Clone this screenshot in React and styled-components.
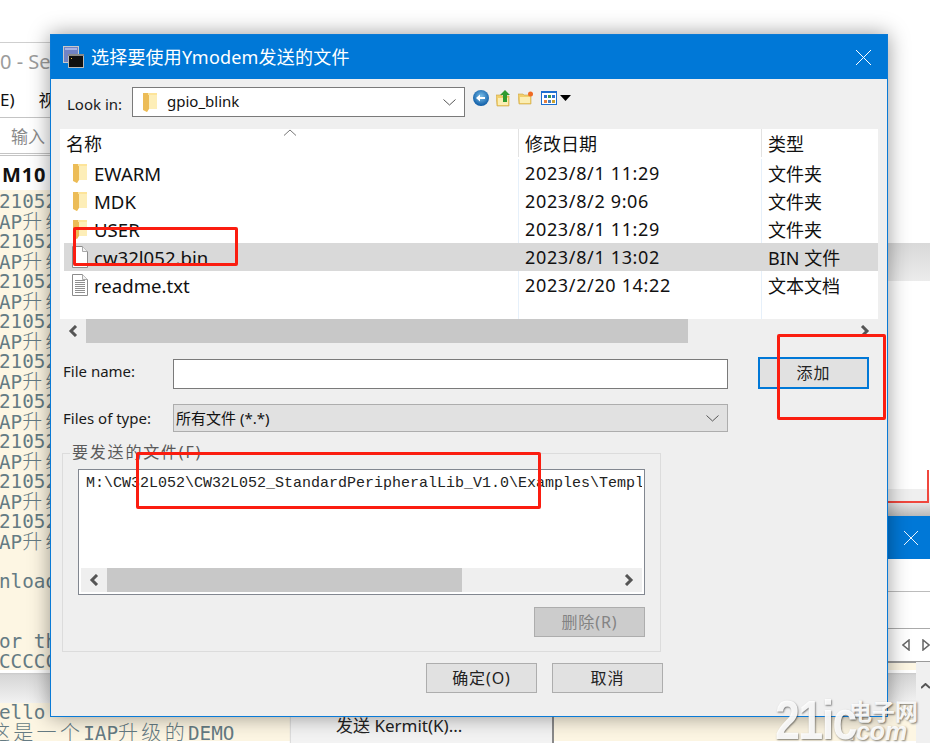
import styled, { createGlobalStyle } from 'styled-components';

const uiFont = `"Noto Sans", "Noto Sans CJK SC", sans-serif`;
const termFont = `"DejaVu Sans Mono", "Noto Sans CJK SC", monospace`;

const GlobalStyle = createGlobalStyle`
  html, body {
    margin: 0;
    padding: 0;
    background: #fff;
  }
  * {
    box-sizing: border-box;
  }
`;

const Screen = styled.div`
  position: relative;
  width: 930px;
  height: 743px;
  overflow: hidden;
  background: #fff;
  font-family: ${uiFont};
`;

/* window behind the dialog, left side */
const BackWindow = styled.div`
  position: absolute;
  left: 0;
  top: 42px;
  width: 916px;
  height: 701px;
  display: flex;
  flex-direction: column;
  border-top: 1px solid #cfcfcf;
  background: #fff;
`;

const BackTitle = styled.div`
  height: 39px;
  padding-top: 4px;
  font-size: 20px;
  line-height: 30px;
  color: #9c9c9c;
  white-space: nowrap;
`;

const BackMenu = styled.div`
  height: 36px;
  display: flex;
  gap: 24px;
  align-items: center;
  font-size: 17px;
  color: #111;
  border-bottom: 1px solid #c4c4c4;
`;

const BackInput = styled.div`
  height: 38px;
  padding-left: 11px;
  font-size: 17px;
  line-height: 38px;
  color: #8a8a8a;
  border-bottom: 3px double #c4c4c4;
`;

const BackTab = styled.div`
  height: 34px;
  padding: 2px 0 0 2px;
  font-family: "Noto Sans", sans-serif;
  font-size: 20px;
  font-weight: 700;
  line-height: 34px;
  letter-spacing: 0.8px;
  color: #111;
`;

const Terminal = styled.div`
  height: ${p => p.$height}px;
  overflow: hidden;
  padding-top: ${p => p.$top || 0}px;
  background: #fdf6e3;
  font-family: ${termFont};
  font-size: 19.3px;
  line-height: 20px;
  color: #657b83;
  white-space: pre;
`;

const TermLine = styled.div`
  height: 20px;
  margin-left: ${p => p.$left ?? -12.6}px;
`;

const Cjk = styled.span`
  font-size: 20px;
  font-weight: 300;
  letter-spacing: 3.3px;
`;

const BackStatus = styled.div`
  height: 33px;
  background: linear-gradient(#fff 0, #fff 3px, #c9c9c9 3px, #d6d6d6 5px, #f2f2f2 100%);
`;

/* popup menu peeking out below the dialog */
const PopupMenu = styled.div`
  position: absolute;
  left: 291px;
  top: 690px;
  width: 263px;
  height: 53px;
  padding: 23px 0 0 45px;
  font-size: 17px;
  line-height: 26px;
  color: #222;
  background: #f3f3f3;
  border-right: 2px solid #8a8a8a;
  box-shadow: -1px 0 1px #ddd;
`;

/* other windows showing at the right edge */
const RightStrip = styled.div`
  position: absolute;
  left: 880px;
  top: 0;
  width: 50px;
  height: 662px;
  display: flex;
  flex-direction: column;
  background: #fff;
`;

const StripBlock = styled.div`
  flex: 0 0 ${p => p.$height}px;
  background: ${p => p.$bg || '#fff'};
  border-bottom: ${p => (p.$line ? `1px solid ${p.$line}` : 'none')};
`;

const StripTitle = styled.div`
  flex: 0 0 43px;
  display: flex;
  align-items: center;
  justify-content: flex-end;
  padding-right: 12px;
  background: #0078d7;
`;

const StripArrows = styled.div`
  flex: 0 0 34px;
  display: flex;
  align-items: center;
  gap: 12px;
  padding-left: 22px;
  background: #fff;
  border-bottom: 2px solid #9a9a9a;
`;

const SideScroll = styled.div`
  position: absolute;
  left: 916px;
  top: 662px;
  width: 14px;
  height: 81px;
  padding: 10px 0 0 5px;
  background: #f0f0f0;
`;

/* the file dialog */
const Dialog = styled.div`
  position: absolute;
  left: 50px;
  top: 34px;
  width: 838px;
  height: 683px;
  display: flex;
  flex-direction: column;
  border: 1px solid #0a7ad6;
  background: #efefef;
  box-shadow: 0 0 20px rgba(0, 0, 0, 0.4);
`;

const TitleBar = styled.div`
  flex: 0 0 44px;
  display: flex;
  align-items: center;
  padding: 0 16px 0 12px;
  background: #0078d7;
  color: #fff;
  font-size: 18px;
`;

const TitleText = styled.div`
  flex: 1;
  margin-left: 7px;
  margin-top: -3px;
  letter-spacing: 0.2px;
`;

const Body = styled.div`
  flex: 1;
  display: flex;
  flex-direction: column;
  padding: 8px 9px 0;
`;

const LookRow = styled.div`
  display: flex;
  align-items: center;
  height: 30px;
  padding-left: 7px;
`;

const FieldLabel = styled.div`
  flex: 0 0 ${p => p.$width}px;
  font-size: 15px;
  color: #1a1a1a;
  margin-top: ${p => p.$top || 0}px;
`;

const Combo = styled.div`
  flex: 0 0 ${p => p.$width}px;
  height: ${p => p.$height}px;
  display: flex;
  align-items: center;
  padding: 0 8px 0 ${p => p.$pad}px;
  border: 1px solid ${p => (p.$gray ? '#adadad' : '#7a7a7a')};
  background: ${p => (p.$gray ? '#e1e1e1' : '#fff')};
  font-size: 15px;
  color: #111;
`;

const ComboText = styled.div`
  flex: 1;
  margin-left: ${p => p.$gap || 0}px;
  margin-top: -2px;
`;

const ToolIcons = styled.div`
  display: flex;
  align-items: center;
  height: 30px;
  margin: -8px 0 0 8px;
  gap: 7px;
`;

const FilePanel = styled.div`
  margin-top: 12px;
  height: 190px;
  display: flex;
  flex-direction: column;
  background: #fff;
  font-size: 18px;
  color: #111;
`;

const ListRow = styled.div`
  flex: ${p => (p.$fill ? '1' : `0 0 ${p.$height || 28}px`)};
  display: grid;
  grid-template-columns: 454px 243px 117px;
  margin-left: 4px;
  background: ${p => (p.$selected ? '#d9d9d9' : 'transparent')};
`;

const HeaderRow = styled(ListRow)`
  position: relative;
  margin-left: 0;
  padding-bottom: 2px;
  grid-template-columns: 458px 243px 117px;
`;

const SortCaret = styled.svg`
  position: absolute;
  left: 223px;
  top: 0;
`;

const NameCell = styled.div`
  display: flex;
  align-items: center;
  gap: 6px;
  padding-left: ${p => p.$pad ?? 8}px;
  white-space: nowrap;
`;

const FileName = styled.span`
  font-size: 18.6px;
`;

const IconSlot = styled.div`
  flex: 0 0 16px;
  width: 16px;
  min-width: 0;
  display: flex;
  justify-content: center;

  svg {
    flex: none;
  }
`;

const Cell = styled.div`
  display: flex;
  align-items: center;
  padding-left: 6px;
  border-left: 1px solid ${p => (p.$head ? '#e2e2e2' : p.$selected ? '#d9d9d9' : '#e6f0fa')};
  white-space: nowrap;
`;

const DateCell = styled(Cell)`
  letter-spacing: 0.65px;
`;

const ScrollBar = styled.div`
  flex: 0 0 ${p => p.$height}px;
  display: flex;
  align-items: stretch;
  background: #efefef;
`;

const ScrollButton = styled.div`
  flex: 0 0 ${p => p.$width}px;
  display: flex;
  align-items: center;
  justify-content: center;
`;

const ScrollThumb = styled.div`
  flex: 0 0 ${p => p.$width}px;
  background: #c8c8c8;
`;

const ScrollGap = styled.div`
  flex: 1;
`;

const FormRow = styled.div`
  display: flex;
  align-items: center;
  height: ${p => p.$height}px;
  margin-top: ${p => p.$top}px;
  padding-left: 3px;
`;

const TextInput = styled.div`
  flex: 0 0 555px;
  height: 30px;
  border: 1px solid #7a7a7a;
  background: #fff;
`;

const Button = styled.div`
  flex: 0 0 111px;
  width: 111px;
  height: ${p => p.$height || 30}px;
  display: flex;
  align-items: center;
  justify-content: center;
  padding-bottom: 3px;
  border: ${p => (p.$focus ? '2px solid #0078d7' : '1px solid #adadad')};
  background: ${p => (p.$disabled ? '#cccccc' : '#e1e1e1')};
  color: ${p => (p.$disabled ? '#838383' : '#222')};
  font-size: 16px;
  letter-spacing: 0.9px;
`;

const AddButton = styled(Button)`
  margin: -2px 0 0 30px;
`;

const Group = styled.div`
  position: relative;
  margin: ${p => p.$top}px 0 0 2px;
  width: 599px;
  height: 199px;
  padding: 15px 0 0 15px;
  border: 1px solid #dcdcdc;
`;

const Legend = styled.div`
  position: absolute;
  left: 7px;
  top: -13px;
  padding: 0 2px;
  background: #efefef;
  font-size: 16px;
  line-height: 22px;
  letter-spacing: 1.8px;
  color: #5a5a5a;
`;

const PathBox = styled.div`
  width: 567px;
  height: 126px;
  display: flex;
  flex-direction: column;
  padding: 0 2px 2px;
  border: 1px solid #828790;
  background: #fff;
`;

const PathText = styled.div`
  flex: 1;
  overflow: hidden;
  padding: 3px 0 0 5px;
  font-family: "Liberation Mono", monospace;
  font-size: 15px;
  line-height: 22px;
  color: #222;
  white-space: pre;
`;

const GroupFoot = styled.div`
  display: flex;
  justify-content: flex-end;
  width: 567px;
  margin-top: 12px;
`;

const ActionRow = styled.div`
  display: flex;
  gap: 15px;
  margin-top: 11px;
  padding-left: 366px;
`;

/* annotations and watermark that sit on top */
const RedBox = styled.div`
  position: absolute;
  left: ${p => p.$x}px;
  top: ${p => p.$y}px;
  width: ${p => p.$w}px;
  height: ${p => p.$h}px;
  border: 3px solid #fb1d10;
  border-radius: 2px;
`;

const StripRed = styled.div`
  position: absolute;
  left: 860px;
  top: 470px;
  width: 69px;
  height: 33px;
  border-right: 2px solid #f0473d;
  border-bottom: 2px solid #f0473d;
  background: linear-gradient(#fff 0, #fff 19px, #efefef 19px);
`;

const Watermark = styled.div`
  position: absolute;
  left: 775px;
  top: 696px;
  display: flex;
  color: rgba(255, 255, 255, 0.92);
  text-shadow: 1px 1px 2px rgba(0, 0, 0, 0.5);
`;

const MarkBig = styled.div`
  width: 74px;
  font-family: "Liberation Sans", sans-serif;
  font-size: 56px;
  font-weight: 700;
  line-height: 48px;
  letter-spacing: -2px;
  transform: scaleX(0.8);
  transform-origin: left center;
  white-space: nowrap;
`;

const MarkSide = styled.div`
  display: flex;
  flex-direction: column;
  padding-top: 2px;
  font-family: "Noto Sans CJK SC", sans-serif;
  font-size: 23px;
  font-weight: 700;
  line-height: 24px;
`;

const MarkCom = styled.div`
  font-family: "Liberation Sans", sans-serif;
  font-size: 25px;
  font-style: italic;
  font-weight: 700;
  line-height: 18px;
`;

const Folder = () => (
  <svg width="15" height="21" viewBox="0 0 15 21">
    <path d="M1 1h13v16H5l-1 3-3-2z" fill="#fde49a" />
    <path d="M6 3h8v14H6z" fill="#fdeeb8" />
    <path d="M0 1h5v2h1v14l-2 3-4-2z" fill="#ecbc57" />
  </svg>
);

const PaperIcon = ({ lines }) => (
  <svg width="18" height="22" viewBox="0 0 18 22">
    <path d="M1.5.5h10l5 5v16h-15z" fill="#fff" stroke="#8c8c8c" />
    <path d="M11.5.5v5h5" fill="#f2f2f2" stroke="#a8a8a8" />
    {lines &&
      [6, 8, 10, 12, 14, 16, 18].map(y => <path key={y} d={`M4 ${y + 0.5}h10`} stroke="#8f8f8f" />)}
  </svg>
);

const TitleIcon = () => (
  <svg width="21" height="22" viewBox="0 0 21 22">
    <rect x="0.5" y="0.5" width="15" height="16" fill="#7183c4" stroke="#c9c9c9" />
    <rect x="2" y="2" width="12" height="2" fill="#a6b4e6" />
    <rect x="5.5" y="8.5" width="15" height="13" fill="#111" stroke="#b8b8b8" />
    <rect x="5" y="8" width="16" height="2" fill="#8a8a8a" />
    <rect x="8" y="12" width="1" height="1" fill="#e8c040" />
  </svg>
);

const CloseIcon = ({ size }) => (
  <svg width={size} height={size} viewBox="0 0 15 15">
    <path d="M0 0l15 15M15 0L0 15" stroke="#fff" strokeWidth="1" fill="none" />
  </svg>
);

const ChevronDown = () => (
  <svg width="13" height="7" viewBox="0 0 13 7">
    <path d="M.5.5l6 5.5 6-5.5" stroke="#555" fill="none" />
  </svg>
);

const ChevronSide = ({ left }) => (
  <svg width="10" height="12" viewBox="0 0 10 12">
    <path d={left ? 'M8 1L3 6l5 5' : 'M2 1l5 5-5 5'} stroke="#555" strokeWidth="3" fill="none" />
  </svg>
);

const TriangleSide = ({ left }) => (
  <svg width="8" height="12" viewBox="0 0 8 12">
    <path d={left ? 'M7 1v10L1 6z' : 'M1 1v10l6-5z'} stroke="#666" strokeWidth="1.5" fill="none" />
  </svg>
);

const BackIcon = () => (
  <svg width="16" height="16" viewBox="0 0 16 16">
    <defs>
      <radialGradient id="backBall" cx="0.5" cy="0.4" r="0.6">
        <stop offset="0" stopColor="#7cc0ea" />
        <stop offset="1" stopColor="#0b5aa5" />
      </radialGradient>
    </defs>
    <circle cx="8" cy="8" r="8" fill="url(#backBall)" />
    <path d="M3 8l4-3.500V7h5v2H7v2.500z" fill="#fff" />
  </svg>
);

const UpIcon = () => (
  <svg width="15" height="17" viewBox="0 0 15 17">
    <path d="M0 5h5l1 1h7v10H1z" fill="#f2cf6b" stroke="#c9a545" strokeWidth="0.6" />
    <path d="M2 8h10v7H2z" fill="#fbeeb4" />
    <path d="M9 0l5 5h-3v7H7V5H4z" fill="#2f9b30" />
  </svg>
);

const NewFolderIcon = () => (
  <svg width="16" height="14" viewBox="0 0 16 14">
    <path d="M0 3h5l1 1h7v9H1z" fill="#f2cf6b" stroke="#c9a545" strokeWidth="0.6" />
    <path d="M2 6h10v6H2z" fill="#fbeeb4" />
    <circle cx="12.500" cy="3" r="2.500" fill="#ef6a24" />
  </svg>
);

const ViewIcon = () => (
  <svg width="16" height="14" viewBox="0 0 16 14">
    <rect x="0.5" y="0.500" width="15" height="13" fill="#fff" stroke="#1c6fd0" />
    <rect x="0" y="0" width="16" height="2" fill="#1c6fd0" />
    <rect x="3" y="4" width="3" height="3" fill="#2a6fd0" />
    <rect x="7" y="4" width="3" height="3" fill="#3a9a50" />
    <rect x="11" y="4" width="3" height="3" fill="#2a6fd0" />
    <rect x="3" y="9" width="3" height="3" fill="#e58040" />
    <rect x="7" y="9" width="3" height="3" fill="#4a80c0" />
    <rect x="11" y="9" width="3" height="3" fill="#c8a030" />
  </svg>
);

const CaretSvg = styled.svg`
  margin-left: -4px;
`;

const ViewCaret = () => (
  <CaretSvg width="11" height="6" viewBox="0 0 11 6">
    <path d="M0 0h11L5.500 6z" fill="#000" />
  </CaretSvg>
);

const Scroller = ({ height, button, thumb }) => (
  <ScrollBar $height={height}>
    <ScrollButton $width={button}>
      <ChevronSide left />
    </ScrollButton>
    <ScrollThumb $width={thumb} />
    <ScrollGap />
    <ScrollButton $width={button}>
      <ChevronSide />
    </ScrollButton>
  </ScrollBar>
);

const files = [
  { name: 'EWARM', date: '2023/8/1 11:29', type: '文件夹', icon: 'folder' },
  { name: 'MDK', date: '2023/8/2 9:06', type: '文件夹', icon: 'folder' },
  { name: 'USER', date: '2023/8/1 11:29', type: '文件夹', icon: 'folder' },
  { name: 'cw32l052.bin', date: '2023/8/1 13:02', type: 'BIN 文件', icon: 'file', selected: true },
  { name: 'readme.txt', date: '2023/2/20 14:22', type: '文本文档', icon: 'text' },
];

const logLines = Array.from({ length: 9 });

export default function App() {
  return (
    <Screen>
      <GlobalStyle />

      <BackWindow>
        <BackTitle>0 - Se</BackTitle>
        <BackMenu>
          <span>E)</span>
          <span>视</span>
        </BackMenu>
        <BackInput>输入</BackInput>
        <BackTab>M10</BackTab>
        <Terminal $height={480} $top={2}>
          {logLines.map((_, i) => (
            <div key={i}>
              <TermLine>L21052</TermLine>
              <TermLine>
                IAP<Cjk>升级</Cjk>
              </TermLine>
            </div>
          ))}
          <TermLine> </TermLine>
          <TermLine>wnload</TermLine>
          <TermLine> </TermLine>
          <TermLine> </TermLine>
          <TermLine>for th</TermLine>
          <TermLine>CCCCCC</TermLine>
        </Terminal>
        <BackStatus />
        <Terminal $height={38}>
          <TermLine>hello</TermLine>
          <TermLine $left={-10}>
            <Cjk>这是一个</Cjk>IAP<Cjk>升级的</Cjk>DEMO
          </TermLine>
          <TermLine $left={-10}>  ll              021052</TermLine>
        </Terminal>
      </BackWindow>

      <PopupMenu>发送 Kermit(K)...</PopupMenu>

      <RightStrip>
        <StripBlock $height={243} />
        <StripBlock $height={38} $bg="linear-gradient(#d9d9d9, #ececec)" />
        <StripBlock $height={235} $bg="linear-gradient(#fff 0, #fff 208px, #e6e6e6 222px, #b9b9b9 100%)" />
        <StripTitle>
          <CloseIcon size={14} />
        </StripTitle>
        <StripBlock $height={33} $line="#bcbcbc" />
        <StripBlock $height={37} $line="#aaaaaa" />
        <StripArrows>
          <TriangleSide left />
          <TriangleSide />
        </StripArrows>
      </RightStrip>
      <StripRed />
      <SideScroll>
        <svg width="9" height="6" viewBox="0 0 9 6">
          <path d="M0 5l4.500-4L9 5" stroke="#555" strokeWidth="2" fill="none" />
        </svg>
      </SideScroll>

      <Dialog>
        <TitleBar>
          <TitleIcon />
          <TitleText>选择要使用Ymodem发送的文件</TitleText>
          <CloseIcon size={15} />
        </TitleBar>
        <Body>
          <LookRow>
            <FieldLabel $width={65} $top={3}>
              Look in:
            </FieldLabel>
            <Combo $width={333} $height={30} $pad={10}>
              <Folder />
              <ComboText $gap={9}>gpio_blink</ComboText>
              <ChevronDown />
            </Combo>
            <ToolIcons>
              <BackIcon />
              <UpIcon />
              <NewFolderIcon />
              <ViewIcon />
              <ViewCaret />
            </ToolIcons>
          </LookRow>

          <FilePanel>
            <HeaderRow $height={30}>
              <SortCaret width="14" height="8" viewBox="0 0 14 8">
                <path d="M1 6.500L7 1l6 5.500" stroke="#777" fill="none" />
              </SortCaret>
              <NameCell $pad={6}>名称</NameCell>
              <Cell $head>修改日期</Cell>
              <Cell $head>类型</Cell>
            </HeaderRow>
            {files.map(file => (
              <ListRow key={file.name} $selected={file.selected}>
                <NameCell>
                  <IconSlot>
                    {file.icon === 'folder' ? <Folder /> : <PaperIcon lines={file.icon === 'text'} />}
                  </IconSlot>
                  <FileName>{file.name}</FileName>
                </NameCell>
                <DateCell $selected={file.selected}>{file.date}</DateCell>
                <Cell $selected={file.selected}>{file.type}</Cell>
              </ListRow>
            ))}
            <ListRow $fill>
              <div />
              <Cell />
              <Cell />
            </ListRow>
          </FilePanel>
          <Scroller height={24} button={26} thumb={602} />

          <FormRow $height={30} $top={16}>
            <FieldLabel $width={110} $top={-6}>
              File name:
            </FieldLabel>
            <TextInput />
            <AddButton $focus $height={32}>
              添加
            </AddButton>
          </FormRow>
          <FormRow $height={28} $top={15}>
            <FieldLabel $width={110}>Files of type:</FieldLabel>
            <Combo $width={555} $height={28} $pad={2} $gray>
              <ComboText>所有文件 (*.*)</ComboText>
              <ChevronDown />
            </Combo>
          </FormRow>

          <Group $top={21}>
            <Legend>要发送的文件(F)</Legend>
            <PathBox>
              <PathText>M:\CW32L052\CW32L052_StandardPeripheralLib_V1.0\Examples\Templ</PathText>
              <Scroller height={24} button={26} thumb={355} />
            </PathBox>
            <GroupFoot>
              <Button $disabled>删除(R)</Button>
            </GroupFoot>
          </Group>

          <ActionRow>
            <Button>确定(O)</Button>
            <Button>取消</Button>
          </ActionRow>
        </Body>
      </Dialog>

      <RedBox $x={73} $y={227} $w={165} $h={39} />
      <RedBox $x={777} $y={334} $w={109} $h={86} />
      <RedBox $x={136} $y={452} $w={405} $h={57} />

      <Watermark>
        <MarkBig>21ic</MarkBig>
        <MarkSide>
          电子网
          <MarkCom>.com</MarkCom>
        </MarkSide>
      </Watermark>
    </Screen>
  );
}
